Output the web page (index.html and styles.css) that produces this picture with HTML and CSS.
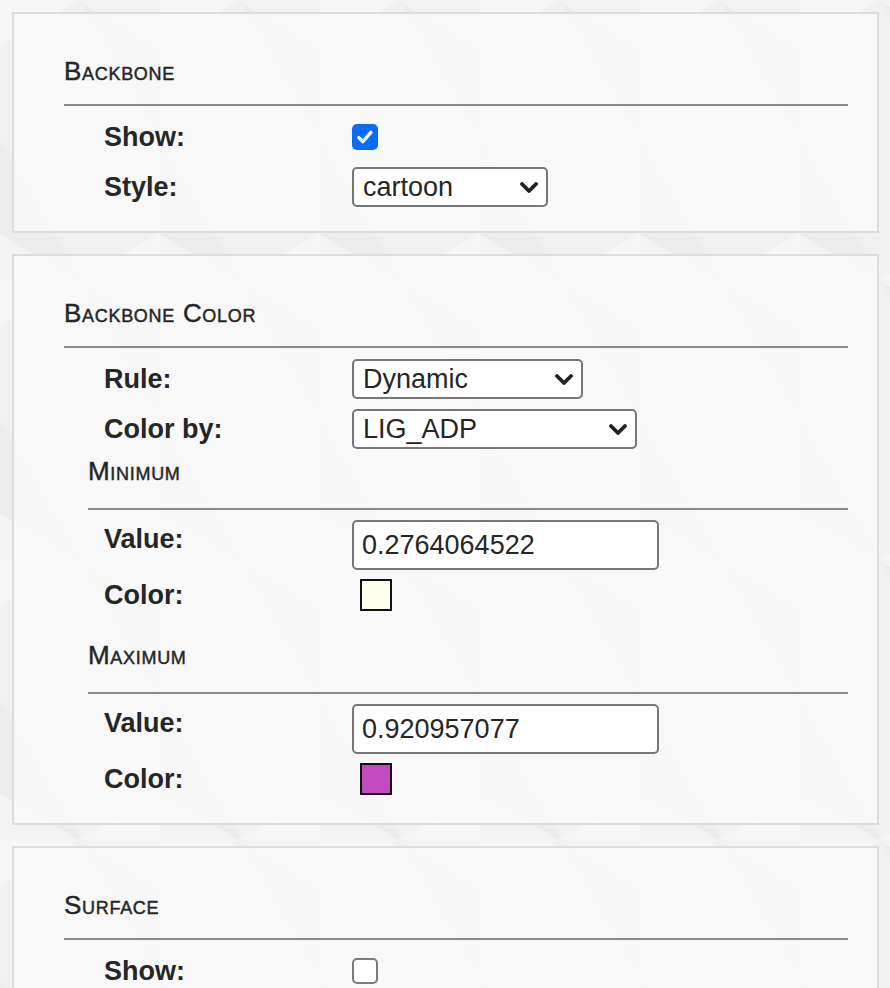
FILE: index.html
```html
<!DOCTYPE html>
<html lang="en">
<head>
<meta charset="utf-8">
<title>Display settings</title>
<link rel="stylesheet" href="styles.css">
</head>
<body>
<main class="page">

  <section class="panel">
    <h2 class="panel-title">Backbone</h2>
    <div class="divider"></div>
    <div class="rows">
      <div class="row">
        <span class="label">Show:</span>
        <span class="check is-checked">
          <svg viewBox="0 0 26 26" width="26" height="26"><path d="M6.8 13.6 L10.8 17.6 L19 8.4" fill="none" stroke="#fff" stroke-width="3.4" stroke-linecap="round" stroke-linejoin="round"/></svg>
        </span>
      </div>
      <div class="row">
        <span class="label">Style:</span>
        <span class="select w-style">
          <span class="select-text">cartoon</span>
          <svg class="chevron" viewBox="0 0 18 11" width="18" height="11"><path d="M2 2 L9 9 L16 2" fill="none" stroke="#222" stroke-width="3.8" stroke-linecap="round" stroke-linejoin="round"/></svg>
        </span>
      </div>
    </div>
  </section>

  <section class="panel">
    <h2 class="panel-title">Backbone Color</h2>
    <div class="divider"></div>
    <div class="rows">
      <div class="row">
        <span class="label">Rule:</span>
        <span class="select w-rule">
          <span class="select-text">Dynamic</span>
          <svg class="chevron" viewBox="0 0 18 11" width="18" height="11"><path d="M2 2 L9 9 L16 2" fill="none" stroke="#222" stroke-width="3.8" stroke-linecap="round" stroke-linejoin="round"/></svg>
        </span>
      </div>
      <div class="row">
        <span class="label">Color by:</span>
        <span class="select w-colorby">
          <span class="select-text">LIG_ADP</span>
          <svg class="chevron" viewBox="0 0 18 11" width="18" height="11"><path d="M2 2 L9 9 L16 2" fill="none" stroke="#222" stroke-width="3.8" stroke-linecap="round" stroke-linejoin="round"/></svg>
        </span>
      </div>
    </div>

    <div class="subsection">
      <h3 class="sub-title">Minimum</h3>
      <div class="divider"></div>
      <div class="sub-rows">
        <div class="row row-value">
          <span class="label">Value:</span>
          <input class="text-input" type="text" value="0.2764064522">
        </div>
        <div class="row">
          <span class="label">Color:</span>
          <span class="swatch swatch-min"></span>
        </div>
      </div>
    </div>

    <div class="subsection subsection-max">
      <h3 class="sub-title">Maximum</h3>
      <div class="divider"></div>
      <div class="sub-rows">
        <div class="row row-value">
          <span class="label">Value:</span>
          <input class="text-input" type="text" value="0.920957077">
        </div>
        <div class="row">
          <span class="label">Color:</span>
          <span class="swatch swatch-max"></span>
        </div>
      </div>
    </div>
  </section>

  <section class="panel">
    <h2 class="panel-title">Surface</h2>
    <div class="divider"></div>
    <div class="rows">
      <div class="row">
        <span class="label">Show:</span>
        <span class="check"></span>
      </div>
    </div>
  </section>

</main>
</body>
</html>
```

FILE: styles.css
```css
html, body {
  height: 100%;
}

body {
  margin: 0;
  background-color: #f1f1f1;
  background-image:
    linear-gradient(30deg, rgba(255,255,255,0.35) 12%, transparent 12.5%, transparent 87%, rgba(255,255,255,0.35) 87.5%),
    linear-gradient(150deg, rgba(255,255,255,0.35) 12%, transparent 12.5%, transparent 87%, rgba(255,255,255,0.35) 87.5%),
    linear-gradient(60deg, rgba(230,230,230,0.35) 25%, transparent 25.5%, transparent 75%, rgba(230,230,230,0.35) 75%);
  background-size: 160px 280px;
  font-family: "Liberation Sans", Arial, Helvetica, sans-serif;
  color: #262626;
  overflow: hidden;
}

.page {
  display: flex;
  flex-direction: column;
  gap: 21px;
  padding: 12px 11px 0 12px;
}

.panel {
  border: 2px solid #dedede;
  background: rgba(250, 250, 250, 0.75);
  padding: 42px 29px 19px 50px;
}

.panel-title,
.sub-title {
  margin: 0;
  font-size: 26px;
  line-height: 30px;
  font-weight: normal;
  font-variant: small-caps;
  letter-spacing: 0.7px;
  color: #262626;
  -webkit-text-stroke: 0.45px #262626;
}

.panel-title + .divider {
  margin-top: 18px;
}

.divider {
  height: 2px;
  background: #888888;
}

.rows {
  display: flex;
  flex-direction: column;
  padding: 6px 0 0 40px;
}

.row {
  display: grid;
  grid-template-columns: 248px auto;
  align-items: center;
  justify-items: start;
  height: 50px;
}

.label {
  font-size: 27px;
  line-height: 31px;
  font-weight: bold;
  color: #262626;
}

.row-value {
  align-items: start;
}

.row-value .label {
  padding-top: 4px;
}

.subsection {
  margin: 2px 0 0 24px;
}

.subsection-max {
  margin-top: 20px;
}

.sub-title + .divider {
  margin-top: 22px;
}

.sub-rows {
  display: flex;
  flex-direction: column;
  padding: 10px 0 0 16px;
}

/* checkbox */
.check {
  display: block;
  width: 26px;
  height: 26px;
  box-sizing: border-box;
  border: 2px solid #7b7b7b;
  border-radius: 5px;
  background: #ffffff;
}

.check.is-checked {
  border: 0;
  background: #0a6cf6;
}

.check svg {
  display: block;
}

/* select */
.select {
  position: relative;
  display: flex;
  align-items: center;
  box-sizing: border-box;
  height: 40px;
  padding: 0 0 0 9px;
  border: 2px solid #777777;
  border-radius: 5px;
  background: #ffffff;
}

.select-text {
  font-size: 27px;
  line-height: 30px;
  color: #262626;
}

.chevron {
  position: absolute;
  right: 8px;
  top: 50%;
  margin-top: -5px;
}

.w-style { width: 196px; }
.w-rule { width: 231px; }
.w-colorby { width: 285px; }

/* text input */
.text-input {
  box-sizing: border-box;
  width: 307px;
  height: 50px;
  margin: 0;
  padding: 0 8px;
  border: 2px solid #777777;
  border-radius: 5px;
  background: #ffffff;
  font-family: "Liberation Sans", Arial, Helvetica, sans-serif;
  font-size: 27px;
  color: #262626;
  outline: none;
}

/* colour swatch */
.swatch {
  display: block;
  width: 32px;
  height: 32px;
  box-sizing: border-box;
  margin-left: 8px;
  border: 2px solid #111111;
}

.swatch-min { background: #fffff0; }
.swatch-max { background: #c44abf; }
```
